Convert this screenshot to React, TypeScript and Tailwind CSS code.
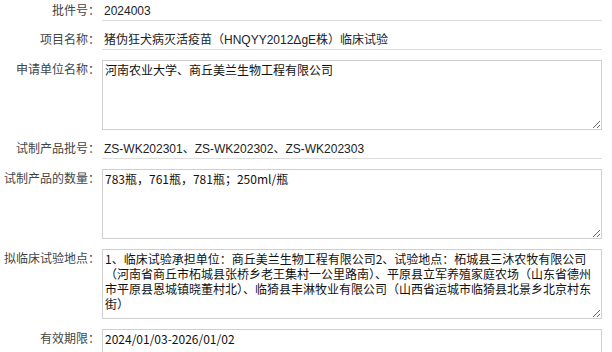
import React from 'react';

type Field = {
  label: string;
  value: string;
  kind: 'input' | 'area';
  mono?: boolean;
};

const fields: Field[] = [
  { label: '批件号：', value: '2024003', kind: 'input' },
  { label: '项目名称：', value: '猪伪狂犬病灭活疫苗（HNQYY2012ΔgE株）临床试验', kind: 'input' },
  { label: '申请单位名称：', value: '河南农业大学、商丘美兰生物工程有限公司', kind: 'area' },
  { label: '试制产品批号：', value: 'ZS-WK202301、ZS-WK202302、ZS-WK202303', kind: 'input' },
  { label: '试制产品的数量：', value: '783瓶，761瓶，781瓶；250ml/瓶', kind: 'area', mono: true },
  {
    label: '拟临床试验地点：',
    value:
      '1、临床试验承担单位：商丘美兰生物工程有限公司2、试验地点：柘城县三沐农牧有限公司（河南省商丘市柘城县张桥乡老王集村一公里路南）、平原县立军养殖家庭农场（山东省德州市平原县恩城镇晓董村北）、临猗县丰淋牧业有限公司（山西省运城市临猗县北景乡北京村东街）',
    kind: 'area',
    mono: true,
  },
  { label: '有效期限：', value: '2024/01/03-2026/01/02', kind: 'area', mono: true },
];

const App = () => {
  return (
    <div className="w-[612px] h-[352px] overflow-hidden bg-white pt-[2px] font-['Liberation_Sans','Noto_Sans_CJK_SC',sans-serif] text-[12px]">
      <div className="flex flex-col gap-[10px]">
        {fields.map((f, i) =>
          f.kind === 'input' ? (
            <div key={i} className="flex items-center">
              <label className="w-[100px] shrink-0 text-right text-[#444] leading-[15px]">{f.label}</label>
              <div className="ml-[2px] w-[500px] h-[19px] border-b border-[#dcdcdc] pl-[2px] flex items-center text-[#222] leading-[15px] whitespace-nowrap">
                {f.value}
              </div>
            </div>
          ) : (
            <div key={i} className="flex items-start">
              <label className="w-[100px] shrink-0 text-right text-[#444] leading-[15px] pt-[3px]">{f.label}</label>
              <textarea
                readOnly
                defaultValue={f.value}
                className={
                  'ml-[2px] w-[500px] h-[70px] shrink-0 resize border border-[#cfcfcf] px-[2px] py-[1px] text-[12px] leading-[15px] text-[#111] outline-none ' +
                  (f.mono
                    ? "font-['Noto_Sans_CJK_SC',sans-serif]"
                    : "font-['Liberation_Sans','Noto_Sans_CJK_SC',sans-serif] pt-[3px]")
                }
              />
            </div>
          )
        )}
      </div>
    </div>
  );
};

export default App;
